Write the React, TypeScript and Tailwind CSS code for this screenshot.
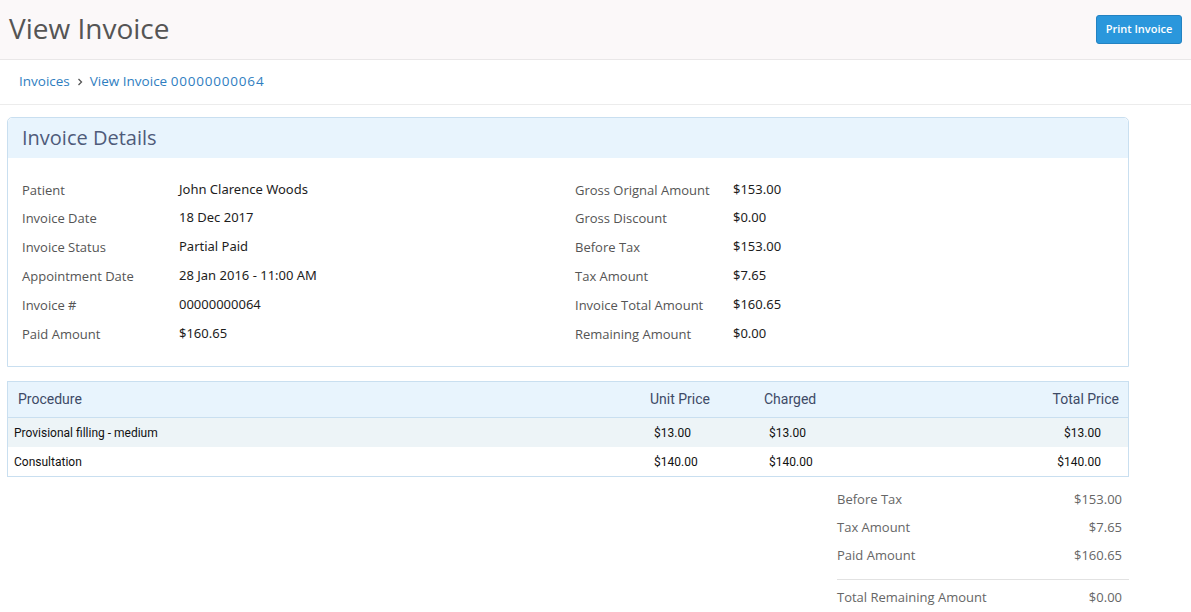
import React from "react";

const left = [
  ["Patient", "John Clarence Woods"],
  ["Invoice Date", "18 Dec 2017"],
  ["Invoice Status", "Partial Paid"],
  ["Appointment Date", "28 Jan 2016 - 11:00 AM"],
  ["Invoice #", "00000000064"],
  ["Paid Amount", "$160.65"],
];
const right = [
  ["Gross Orignal Amount", "$153.00"],
  ["Gross Discount", "$0.00"],
  ["Before Tax", "$153.00"],
  ["Tax Amount", "$7.65"],
  ["Invoice Total Amount", "$160.65"],
  ["Remaining Amount", "$0.00"],
];

function Col({ rows, lw }: { rows: string[][]; lw: string }) {
  return (
    <div className="flex flex-col">
      {rows.map(([l, v]) => (
        <div key={l} className="flex items-center h-[28.8px]">
          <div className={`${lw} text-[13px] text-[#555] font-['Open_Sans',sans-serif]`}>{l}</div>
          <div className="text-[13px] text-[#1d1d1d] -mt-[2px] font-['Noto_Sans',sans-serif]">{v}</div>
        </div>
      ))}
    </div>
  );
}

export default function App() {
  return (
    <div className="w-[1191px] min-h-[612px] bg-white font-['Open_Sans',sans-serif]">
      <div className="h-[60px] bg-[#fbf8f9] border-b border-[#e9e7e8] flex items-center justify-between pl-[9px] pr-[9px]">
        <div className="text-[28px] text-[#555] leading-none -mt-[3px]">View Invoice</div>
        <button className="h-[29px] w-[86px] bg-[#2a97dc] border border-[#2382c2] rounded-[3px] text-white text-[11px] font-semibold">
          Print Invoice
        </button>
      </div>
      <div className="h-[45px] border-b border-[#ececec] flex items-center pl-[19px] pb-[1px] text-[13.5px] text-[#2f7ebf] gap-[6px]">
        <span>Invoices</span>
        <svg width="6" height="8" viewBox="0 0 6 8" className="mx-[1px]">
          <path d="M1.5 1 L4.5 4 L1.5 7" fill="none" stroke="#555" strokeWidth="1.3" />
        </svg>
        <span>
          View Invoice <span className="tracking-[0.8px]">00000000064</span>
        </span>
      </div>
      <div className="ml-[7px] w-[1122px]">
        <div className="mt-[12px] border border-[#c9dff0] rounded-t-[5px]">
          <div className="h-[40px] bg-[#e8f4fd] px-[14px] flex items-center text-[20px] text-[#4f5b7a] rounded-t-[5px]">
            Invoice Details
          </div>
          <div className="grid grid-cols-[553px_1fr] pl-[14px] pt-[18px] pb-[17px]">
            <Col rows={left} lw="w-[157px]" />
            <Col rows={right} lw="w-[158px]" />
          </div>
        </div>
        <div className="mt-[14px] border border-[#c9dff0] font-['Roboto',sans-serif]">
          <div className="h-[36px] bg-[#e8f4fd] border-b border-[#c9dff0] flex items-center text-[14px] text-[#3e4a66]">
            <div className="flex-1 pl-[10px]">Procedure</div>
            <div className="w-[114px]">Unit Price</div>
            <div className="w-[144px]">Charged</div>
            <div className="w-[220px] text-right pr-[9px]">Total Price</div>
          </div>
          {[
            ["Provisional filling - medium", "$13.00", "$13.00", "$13.00", "bg-[#edf4f7]"],
            ["Consultation", "$140.00", "$140.00", "$140.00", "bg-white"],
          ].map(([p, u, c, t, bg]) => (
            <div key={p} className={`h-[29px] flex items-center pt-[2px] text-[12px] text-[#111] ${bg}`}>
              <div className="flex-1 pl-[6px]">{p}</div>
              <div className="w-[114px] pl-[4px]">{u}</div>
              <div className="w-[144px] pl-[5px]">{c}</div>
              <div className="w-[220px] text-right pr-[27px]">{t}</div>
            </div>
          ))}
        </div>
        <div className="ml-auto w-[292px] mt-[9px] text-[13px] text-[#666]">
          {[
            ["Before Tax", "$153.00"],
            ["Tax Amount", "$7.65"],
            ["Paid Amount", "$160.65"],
          ].map(([l, v]) => (
            <div key={l} className="h-[28px] flex items-center justify-between pr-[7px]">
              <span>{l}</span>
              <span>{v}</span>
            </div>
          ))}
          <div className="mt-[9px] border-t border-[#e2e2e2] h-[32px] flex items-center justify-between pr-[7px] pt-[4px]">
            <span>Total Remaining Amount</span>
            <span>$0.00</span>
          </div>
        </div>
      </div>
    </div>
  );
}
